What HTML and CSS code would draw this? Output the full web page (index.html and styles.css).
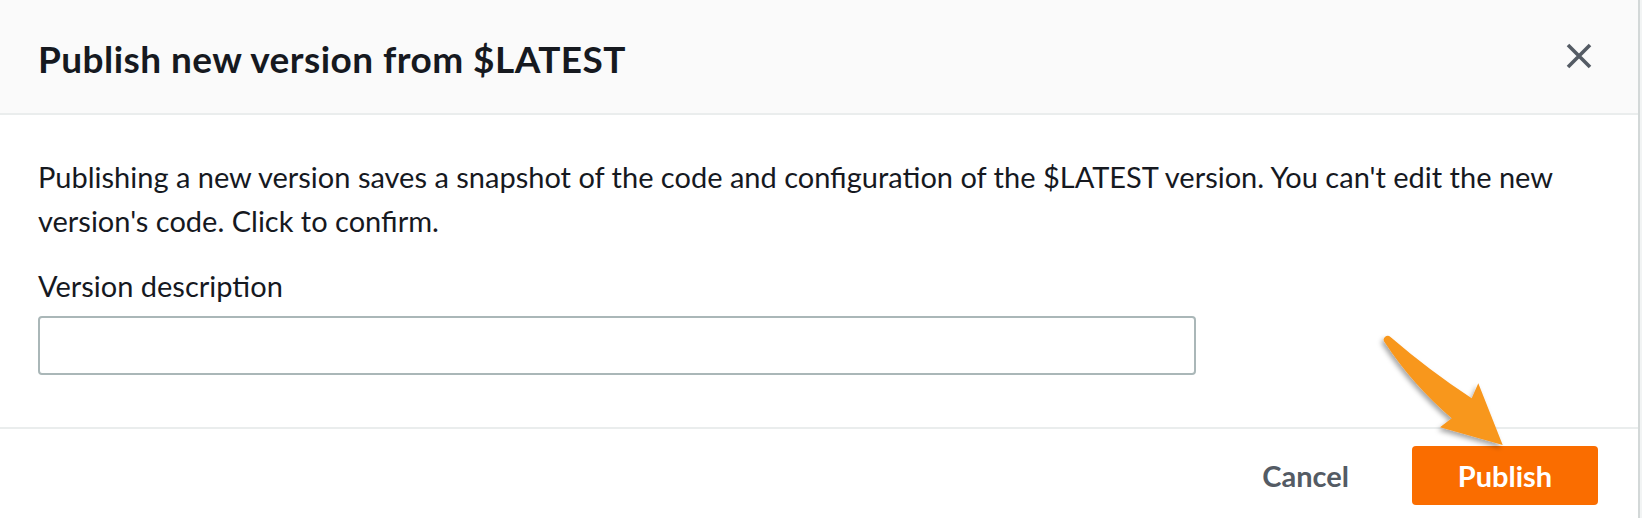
FILE: index.html
```html
<!DOCTYPE html>
<html lang="en">
<head>
<meta charset="utf-8">
<title>Publish new version</title>
<link rel="stylesheet" href="styles.css">
</head>
<body>
<div class="modal">
  <header class="modal-header">
    <h2 class="modal-title">Publish new version from $LATEST</h2>
    <button class="close" aria-label="Close">
      <svg width="26" height="26" viewBox="0 0 26 26"><path d="M2 2 L24 24 M24 2 L2 24" stroke="#545b64" stroke-width="3.6" fill="none"/></svg>
    </button>
  </header>
  <div class="modal-body">
    <p class="intro">Publishing a new version saves a snapshot of the code and configuration of the $LATEST version. You can't edit the new version's code. Click to confirm.</p>
    <label class="field-label" for="desc">Version description</label>
    <input class="text-input" id="desc" type="text">
  </div>
  <footer class="modal-footer">
    <button class="btn btn-link">Cancel</button>
    <button class="btn btn-primary">Publish</button>
  </footer>
</div>
<svg class="callout-arrow" width="1642" height="518" viewBox="0 0 1642 518">
  <defs>
    <filter id="shadow" x="-20%" y="-20%" width="140%" height="140%">
      <feDropShadow dx="-2" dy="3" stdDeviation="2.5" flood-color="#000" flood-opacity="0.35"/>
    </filter>
  </defs>
  <path filter="url(#shadow)" fill="#f8971f" d="M1385,342.7 A3.2,3.2 0 0 1 1390.5,337 Q1430,371 1471.7,398.3 L1478.3,383.3 L1502.7,445 L1440,427.3 L1451.7,418.3 Q1412,384 1385,342.7 Z"/>
</svg>
</body>
</html>
```
FILE: styles.css
```css
* { box-sizing: border-box; }
html, body { margin: 0; padding: 0; }
body {
  width: 1642px;
  height: 518px;
  overflow: hidden;
  background: #f2f4f4;
  font-family: Lato, "Noto Sans", sans-serif;
  color: #16191f;
  position: relative;
}
.modal {
  width: 1640px;
  height: 518px;
  background: #ffffff;
  border-right: 2px solid #d3d8d8;
  display: flex;
  flex-direction: column;
}
.modal > * { flex-shrink: 0; }
.modal-header {
  height: 115px;
  background: #fafafa;
  border-bottom: 2px solid #eaeded;
  display: flex;
  align-items: center;
  justify-content: space-between;
  padding: 0 46px 0 38px;
}
.modal-title {
  margin: 0;
  font-size: 37px;
  letter-spacing: 0.45px;
  font-weight: 700;
  line-height: 44px;
  color: #16191f;
  padding-top: 4px;
}
.close {
  border: 0;
  background: transparent;
  padding: 0;
  width: 26px;
  height: 26px;
  display: flex;
  margin-top: -2px;
}
.modal-body {
  padding: 40px 38px 52px 38px;
  display: flex;
  flex-direction: column;
  align-items: flex-start;
}
.intro {
  margin: 0;
  font-size: 29px;
  line-height: 44px;
}
.field-label {
  margin-top: 21px;
  font-size: 29px;
  line-height: 44px;
}
.text-input {
  margin-top: 8px;
  width: 1158px;
  height: 59px;
  border: 2px solid #aab7b8;
  border-radius: 4px;
  background: #fff;
  font: inherit;
}
.modal-footer {
  border-top: 2px solid #eaeded;
  padding: 17px 40px 17px 38px;
  display: flex;
  justify-content: flex-end;
  align-items: center;
  gap: 20px;
}
.btn {
  height: 59px;
  border: 0;
  border-radius: 4px;
  font-family: Lato, "Noto Sans", sans-serif;
  font-size: 29px;
  font-weight: 700;
  padding: 0 43px;
  cursor: pointer;
}
.btn-link {
  background: transparent;
  color: #545b64;
}
.btn-primary {
  background: #fa6d00;
  color: #ffffff;
  width: 186px;
}
.callout-arrow {
  position: absolute;
  left: 0;
  top: 0;
  pointer-events: none;
}
```
